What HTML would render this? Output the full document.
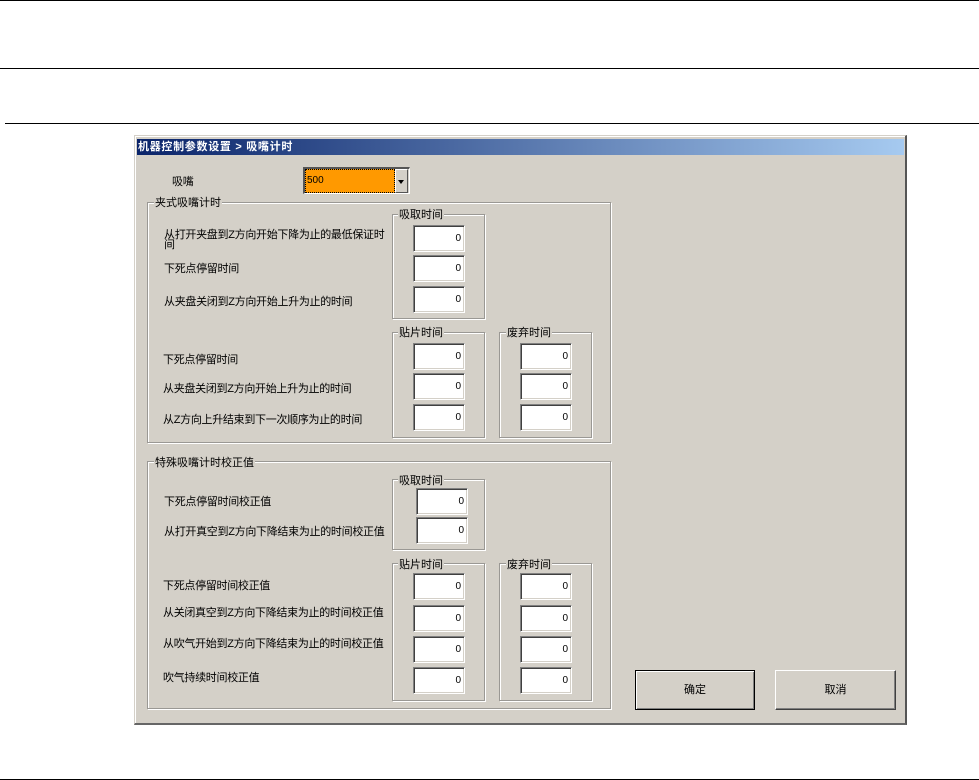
<!DOCTYPE html>
<html><head><meta charset="utf-8">
<style>
html,body{margin:0;padding:0;background:#fff;width:979px;height:780px;overflow:hidden}
body{position:relative;font-family:"Liberation Sans","WenQuanYi Zen Hei","Noto Sans CJK SC",sans-serif;font-size:11px;color:#000}
div{position:absolute;box-sizing:border-box}
.l{background:#000;height:1px;left:0;width:979px}
.t{white-space:nowrap;line-height:12px;height:12px;letter-spacing:-.3px;background:none;margin-top:1px}
.g{border:1px solid #9a9894;box-shadow:1px 1px 0 #fff,inset 1px 1px 0 #fff}
.c{white-space:nowrap;line-height:12px;height:12px;background:#d4d0c8;padding:0 1px;letter-spacing:0;margin-top:1px}
.i{width:52px;height:27px;background:#fff;border-top:1px solid #808080;border-left:1px solid #808080;border-right:1px solid #fff;border-bottom:1px solid #fff;box-shadow:inset 1px 1px 0 #404040,inset -1px -1px 0 #d4d0c8;text-align:right;padding-right:3px;line-height:25px;font-size:10px}
.b{width:120px;height:40px;background:#d4d0c8;text-align:center;line-height:39px}
</style></head><body>
<div class="l" style="top:0"></div>
<div class="l" style="top:68px"></div>
<div class="l" style="top:123px;left:5px;width:974px"></div>
<div class="l" style="top:779px"></div>

<div style="left:134px;top:135px;width:773px;height:590px;background:#d4d0c8;border-top:1px solid #d4d0c8;border-left:1px solid #d4d0c8;border-right:2px solid #555;border-bottom:2px solid #666;box-shadow:inset 1px 1px 0 #fff"></div>
<div style="left:137px;top:139px;width:767px;height:16px;background:linear-gradient(90deg,#0a246a,#a6caf0)"></div>
<div class="t" style="left:138px;top:140px;color:#fff;font-weight:bold;letter-spacing:.7px">机器控制参数设置 &gt; 吸嘴计时</div>

<div class="t" style="left:172px;top:175px">吸嘴</div>
<div style="left:303px;top:167px;width:107px;height:27px;background:#d4d0c8;border-top:2px solid #555;border-left:2px solid #555;border-right:1px solid #fff;border-bottom:1px solid #fff"></div>
<div style="left:305px;top:169px;width:90px;height:24px;background:#ff9900;border:1px dotted #000"></div>
<div class="t" style="left:307px;top:174px;font-size:10px;letter-spacing:0">500</div>
<div style="left:395px;top:169px;width:13px;height:24px;background:#d4d0c8;border-right:1px solid #555;border-bottom:1px solid #555;border-left:1px solid #fff;border-top:1px solid #fff"></div>
<div style="left:398px;top:180px;width:0;height:0;border-left:3.5px solid transparent;border-right:3.5px solid transparent;border-top:4px solid #000"></div>

<!-- Group 1 -->
<div class="g" style="left:147px;top:202px;width:464px;height:241px"></div>
<div class="c" style="left:154px;top:196px">夹式吸嘴计时</div>
<div class="t" style="left:164px;top:228px">从打开夹盘到Z方向开始下降为止的最低保证时</div>
<div class="t" style="left:164px;top:238px">间</div>
<div class="t" style="left:164px;top:262px">下死点停留时间</div>
<div class="t" style="left:164px;top:295px">从夹盘关闭到Z方向开始上升为止的时间</div>
<div class="t" style="left:163px;top:353px">下死点停留时间</div>
<div class="t" style="left:163px;top:382px">从夹盘关闭到Z方向开始上升为止的时间</div>
<div class="t" style="left:163px;top:413px">从Z方向上升结束到下一次顺序为止的时间</div>

<div class="g" style="left:392px;top:214px;width:93px;height:105px"></div>
<div class="c" style="left:398px;top:208px">吸取时间</div>
<div class="i" style="left:413px;top:225px">0</div>
<div class="i" style="left:413px;top:255px">0</div>
<div class="i" style="left:413px;top:286px">0</div>

<div class="g" style="left:392px;top:332px;width:93px;height:106px"></div>
<div class="c" style="left:398px;top:326px">贴片时间</div>
<div class="i" style="left:413px;top:343px">0</div>
<div class="i" style="left:413px;top:373px">0</div>
<div class="i" style="left:413px;top:404px">0</div>

<div class="g" style="left:499px;top:332px;width:93px;height:106px"></div>
<div class="c" style="left:506px;top:326px">废弃时间</div>
<div class="i" style="left:520px;top:343px">0</div>
<div class="i" style="left:520px;top:373px">0</div>
<div class="i" style="left:520px;top:404px">0</div>

<!-- Group 2 -->
<div class="g" style="left:147px;top:461px;width:464px;height:248px"></div>
<div class="c" style="left:154px;top:456px">特殊吸嘴计时校正值</div>
<div class="t" style="left:164px;top:495px">下死点停留时间校正值</div>
<div class="t" style="left:164px;top:525px">从打开真空到Z方向下降结束为止的时间校正值</div>
<div class="t" style="left:163px;top:579px">下死点停留时间校正值</div>
<div class="t" style="left:163px;top:606px">从关闭真空到Z方向下降结束为止的时间校正值</div>
<div class="t" style="left:163px;top:637px">从吹气开始到Z方向下降结束为止的时间校正值</div>
<div class="t" style="left:163px;top:671px">吹气持续时间校正值</div>

<div class="g" style="left:392px;top:479px;width:93px;height:71px"></div>
<div class="c" style="left:398px;top:474px">吸取时间</div>
<div class="i" style="left:416px;top:488px">0</div>
<div class="i" style="left:416px;top:517px">0</div>

<div class="g" style="left:392px;top:563px;width:93px;height:138px"></div>
<div class="c" style="left:398px;top:558px">贴片时间</div>
<div class="i" style="left:413px;top:573px">0</div>
<div class="i" style="left:413px;top:605px">0</div>
<div class="i" style="left:413px;top:636px">0</div>
<div class="i" style="left:413px;top:667px">0</div>

<div class="g" style="left:499px;top:563px;width:93px;height:138px"></div>
<div class="c" style="left:506px;top:558px">废弃时间</div>
<div class="i" style="left:520px;top:573px">0</div>
<div class="i" style="left:520px;top:605px">0</div>
<div class="i" style="left:520px;top:636px">0</div>
<div class="i" style="left:520px;top:667px">0</div>

<div class="b" style="left:635px;top:670px;border:1px solid #000;box-shadow:inset 1px 1px 0 #fff,inset -1px -1px 0 #808080">确定</div>
<div class="b" style="left:775px;top:670px;width:121px;border-top:1px solid #fff;border-left:1px solid #fff;border-right:1px solid #404040;border-bottom:1px solid #404040;box-shadow:inset -1px -1px 0 #808080">取消</div>
</body></html>
